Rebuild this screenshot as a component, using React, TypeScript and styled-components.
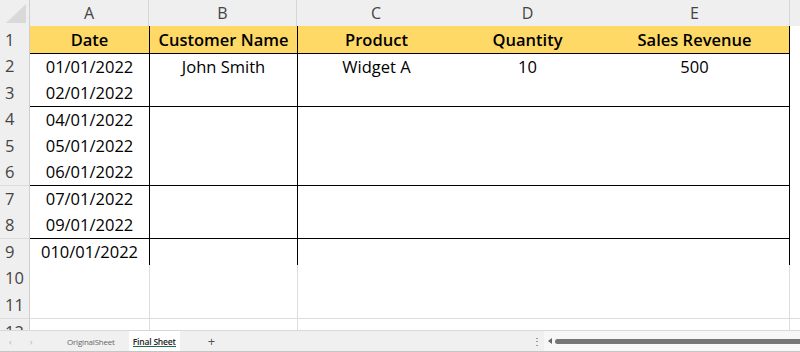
import styled, { createGlobalStyle, css } from "styled-components";

const GlobalStyle = createGlobalStyle`
  html, body {
    margin: 0;
    padding: 0;
    background: #ffffff;
  }
  body {
    font-family: "Open Sans", "Noto Sans", sans-serif;
  }
`;

const Window = styled.div`
  width: 800px;
  height: 352px;
  display: flex;
  flex-direction: column;
  overflow: hidden;
  background: #fff;
`;

const SheetArea = styled.div`
  flex: 1;
  overflow: hidden;
`;

const Grid = styled.div`
  display: grid;
  grid-template-columns: 30px 119px 148px 158px 145px 190px 10px;
  grid-template-rows: 26px 26.5px repeat(11, 26.5px);
`;

const Corner = styled.div`
  background: #efefef;
  border-right: 1px solid #d0d0d0;
  display: flex;
  align-items: flex-end;
  justify-content: flex-end;
  padding: 0 3px 3px 0;
  box-sizing: border-box;
`;

const ColHead = styled.div<{ $sep?: boolean }>`
  background: #efefef;
  color: #444;
  font-size: 16px;
  display: flex;
  align-items: center;
  justify-content: center;
  box-sizing: border-box;
  ${(p) =>
    p.$sep &&
    css`
      border-right: 1px solid #d6d6d6;
    `}
`;

const RowHead = styled.div<{ $line?: boolean }>`
  background: #efefef;
  color: #444;
  font-size: 16.5px;
  display: flex;
  align-items: center;
  padding-left: 5px;
  box-sizing: border-box;
  border-right: 1px solid #cfcfcf;
  ${(p) =>
    p.$line &&
    css`
      border-top: 1px solid #dcdcdc;
    `}
`;

const Cell = styled.div<{
  $head?: boolean;
  $top?: boolean;
  $left?: "black" | "gray";
  $right?: "black" | "gray";
  $grayTop?: boolean;
}>`
  box-sizing: border-box;
  display: flex;
  align-items: center;
  justify-content: center;
  font-family: "Open Sans", "Noto Sans", sans-serif;
  font-size: 16.5px;
  color: #000;
  white-space: nowrap;
  background: ${(p) => (p.$head ? "#ffd966" : "#fff")};
  font-weight: ${(p) => (p.$head ? 600 : 400)};
  border-top: ${(p) =>
    p.$top ? "1px solid #000" : p.$grayTop ? "1px solid #dcdcdc" : "none"};
  border-left: ${(p) =>
    p.$left === "black"
      ? "1px solid #000"
      : p.$left === "gray"
      ? "1px solid #dcdcdc"
      : "none"};
  border-right: ${(p) =>
    p.$right === "black"
      ? "1px solid #000"
      : p.$right === "gray"
      ? "1px solid #dcdcdc"
      : "none"};
`;

const TabBar = styled.div`
  height: 22px;
  flex: none;
  background: #f0f0f0;
  border-top: 1px solid #d8d8d8;
  border-bottom: 1px solid #c6c6c6;
  box-sizing: border-box;
  display: flex;
  align-items: center;
  font-family: "Open Sans", "Noto Sans", sans-serif;
`;

const NavArrows = styled.div`
  display: flex;
  gap: 18px;
  padding-left: 9px;
  width: 54px;
  color: #b5b5b5;
  font-size: 9px;
  line-height: 1;
`;

const Tab = styled.div<{ $active?: boolean }>`
  height: 100%;
  display: flex;
  align-items: center;
  padding: 0 4px;
  margin-right: ${(p) => (p.$active ? "6px" : "10px")};
  font-size: ${(p) => (p.$active ? "8.5px" : "8px")};
  letter-spacing: -0.2px;
  color: ${(p) => (p.$active ? "#222" : "#666")};
  font-weight: ${(p) => (p.$active ? 600 : 400)};
  background: ${(p) => (p.$active ? "#fff" : "transparent")};
  position: relative;
  ${(p) =>
    p.$active &&
    css`
      &::after {
        content: "";
        position: absolute;
        left: 4px;
        right: 4px;
        bottom: 4px;
        height: 1px;
        background: #1e6b48;
      }
    `}
`;

const AddTab = styled.div`
  color: #555;
  font-size: 13px;
  margin-left: 22px;
`;

const Spacer = styled.div`
  flex: 1;
`;

const Dots = styled.div`
  color: #555;
  font-size: 10px;
  width: 10px;
  margin-right: 2px;
  line-height: 1;
`;

const ScrollTrack = styled.div`
  width: 252px;
  height: 100%;
  display: flex;
  align-items: center;
  background: #f7f7f7;
  padding-left: 4px;
  gap: 3px;
`;

const ScrollArrow = styled.div`
  width: 0;
  height: 0;
  border-top: 3px solid transparent;
  border-bottom: 3px solid transparent;
  border-right: 4px solid #666;
`;

const Thumb = styled.div`
  flex: 1;
  height: 5px;
  border-radius: 3px 0 0 3px;
  background: #767676;
`;

const dates = [
  "01/01/2022",
  "02/01/2022",
  "04/01/2022",
  "05/01/2022",
  "06/01/2022",
  "07/01/2022",
  "09/01/2022",
  "010/01/2022",
];

// first data row of each bordered block
const groupStarts = [2, 4, 7, 9];
const rowValues: Record<number, string[]> = {
  2: ["John Smith", "Widget A", "10", "500"],
};

function App() {
  const rows = [];
  for (let r = 2; r <= 12; r++) {
    const inTable = r <= 9;
    const top = groupStarts.includes(r);
    const vals = rowValues[r] || ["", "", "", ""];
    const edge = inTable ? "black" : "gray";
    rows.push(
      <RowHead key={`h${r}`} $line={r === 7 || r === 9 || r === 12}>
        {r}
      </RowHead>,
      <Cell key={`a${r}`} $top={top} $grayTop={r === 12}>
        {inTable ? dates[r - 2] : ""}
      </Cell>,
      <Cell key={`b${r}`} $top={top} $grayTop={r === 12} $left={edge}>
        {vals[0]}
      </Cell>,
      <Cell key={`c${r}`} $top={top} $grayTop={r === 12} $left={edge}>
        {vals[1]}
      </Cell>,
      <Cell key={`d${r}`} $top={top} $grayTop={r === 12}>
        {vals[2]}
      </Cell>,
      <Cell key={`e${r}`} $top={top} $grayTop={r === 12} $right={edge}>
        {vals[3]}
      </Cell>,
      <Cell key={`f${r}`} $grayTop={r === 12} />
    );
  }

  return (
    <>
      <GlobalStyle />
      <Window>
        <SheetArea>
          <Grid>
            <Corner>
              <svg width="20" height="19" viewBox="0 0 20 19">
                <polygon points="20,0 20,19 0,19" fill="#d9d9d9" />
              </svg>
            </Corner>
            <ColHead $sep>A</ColHead>
            <ColHead $sep>B</ColHead>
            <ColHead>C</ColHead>
            <ColHead>D</ColHead>
            <ColHead $sep>E</ColHead>
            <ColHead />

            <RowHead>1</RowHead>
            <Cell $head>Date</Cell>
            <Cell $head $left="black">
              Customer Name
            </Cell>
            <Cell $head $left="black">
              Product
            </Cell>
            <Cell $head>Quantity</Cell>
            <Cell $head $right="black">
              Sales Revenue
            </Cell>
            <Cell />

            {rows}
          </Grid>
        </SheetArea>
        <TabBar>
          <NavArrows>
            <span>‹</span>
            <span>›</span>
          </NavArrows>
          <Tab>OriginalSheet</Tab>
          <Tab $active>Final Sheet</Tab>
          <AddTab>+</AddTab>
          <Spacer />
          <Dots>⋮</Dots>
          <ScrollTrack>
            <ScrollArrow />
            <Thumb />
          </ScrollTrack>
        </TabBar>
      </Window>
    </>
  );
}

export default App;
